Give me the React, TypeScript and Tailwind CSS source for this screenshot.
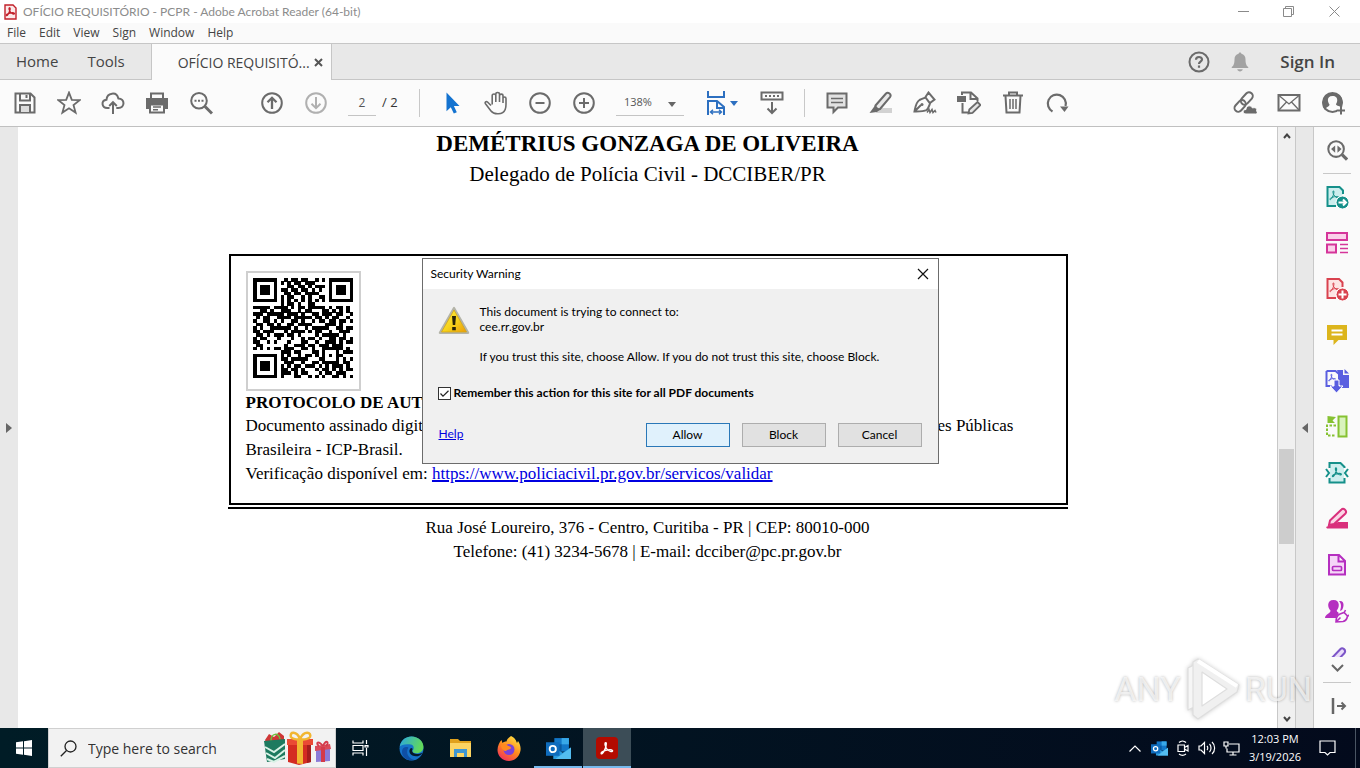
import type { ReactNode } from 'react';

const ui = "font-['Open_Sans','Noto_Sans',sans-serif]";

const QR_ROWS = [
  '11111110010110110010101111111',
  '10000010101011011100001000001',
  '10111010001101101011101011101',
  '10111010110110110101001011101',
  '10111010011011011110001011101',
  '10000010101100101001101000001',
  '11111110101010101010101111111',
  '00000000101101001100000000000',
  '11111011110101101111101011010',
  '00110100111001011000110101010',
  '11101111101110100110111011001',
  '01011001111011111011010110010',
  '10011010100110100101101101101',
  '01101101001101111000011101000',
  '10100111111010010111110011011',
  '11011100010111101011001001110',
  '01101011101101000010111110100',
  '10110001000100101101001101101',
  '11001010001000110010011101011',
  '01100000010011101101110111000',
  '10101011011100110100111111010',
  '00000000111011000110100010111',
  '11111110101001011010101011000',
  '10000010110111110001100010101',
  '10111010011100100110111110110',
  '10111010101011011101010111010',
  '10111010110110100010110101011',
  '10000010111010110001011011100',
  '11111110100011001010100110101',
];

function Icon({ children, size = 24, className = 'text-[#6b6b6b]' }: { children: ReactNode; size?: number; className?: string }) {
  return (
    <svg width={size} height={size} viewBox="0 0 24 24" fill="none" stroke="currentColor" strokeWidth="2" className={`shrink-0 ${className}`} aria-hidden="true">
      {children}
    </svg>
  );
}

function ToolButton({ label, children }: { label: string; children: ReactNode }) {
  return (
    <button aria-label={label} className="flex h-11 w-11 shrink-0 items-center justify-center">
      {children}
    </button>
  );
}

function AcrobatMark({ x = 0, y = 0, s = 1, w = 1.4 }: { x?: number; y?: number; s?: number; w?: number }) {
  return (
    <path
      transform={`translate(${x} ${y}) scale(${s})`}
      strokeWidth={w}
      strokeLinejoin="round"
      d="M5.2 1c-1-.2-1 1.300-.6 2.600C5.200 5.800 7 8 9 8.600c1.500.4 2.300-.3 1.800-.9-.8-.9-4.300-.5-6.500.2C2 8.600.6 9.800 1 10.500c.5.8 1.900-.6 2.700-2.400C4.700 6.200 6.200 1.800 5.200 1Z"
    />
  );
}

function TitleBar() {
  return (
    <header className="flex h-[23px] shrink-0 items-center bg-white pr-[2px] font-[Lato,sans-serif] text-[#8c8c8c]">
      <svg className="ml-1 shrink-0" width="13" height="16" viewBox="0 0 13 16" fill="none" stroke="#c2202a" aria-hidden="true">
        <path d="M1 1h8l3 3v11H1z" fill="#fbe9e9" strokeWidth="1.400" />
        <AcrobatMark x={1.600} y={3} s={0.8} w={1.700} />
      </svg>
      <h1 className="ml-[6px] text-[12px]">OFÍCIO REQUISITÓRIO - PCPR - Adobe Acrobat Reader (64-bit)</h1>
      <div className="ml-auto flex">
        <button aria-label="Minimize" className="flex h-[22px] w-[45px] items-center justify-center">
          <svg width="11" height="11" stroke="#8a8a8a"><path d="M0 5.500h11" /></svg>
        </button>
        <button aria-label="Restore" className="flex h-[22px] w-[45px] items-center justify-center">
          <svg width="11" height="11" stroke="#8a8a8a" fill="none"><path d="M.5 2.500h8v8h-8zM2.500 2.500v-2h8v8h-2" /></svg>
        </button>
        <button aria-label="Close window" className="flex h-[22px] w-[47px] items-center justify-center">
          <svg width="11" height="11" stroke="#8a8a8a"><path d="M.5.5l10 10M10.500.5l-10 10" /></svg>
        </button>
      </div>
    </header>
  );
}

function MenuBar() {
  return (
    <nav className="flex h-5 shrink-0 items-center gap-[13px] bg-[#fafafa] pl-[7px] text-[12px] text-[#444]">
      {['File', 'Edit', 'View', 'Sign', 'Window', 'Help'].map((m) => (
        <button key={m}>{m}</button>
      ))}
    </nav>
  );
}

function TabBar() {
  return (
    <div className="flex h-[37px] shrink-0 border-y border-[#c6c6c6] bg-[#e8e8e8] text-[14px] text-[#444]">
      <button className="pl-4 text-[15px]">Home</button>
      <button className="pl-[29px] text-[15px]">Tools</button>
      <div className="-mb-px ml-[26px] flex w-[181px] items-center justify-between border-x border-[#c6c6c6] bg-[#fbfbfb] pr-2 pl-[26px]">
        <span>OFÍCIO REQUISITÓ...</span>
        <button aria-label="Close tab">
          <svg width="9" height="9" stroke="#555" strokeWidth="2"><path d="M1 1l7 7M8 1l-7 7" /></svg>
        </button>
      </div>
      <div className="ml-auto flex items-center pr-[25px]">
        <button aria-label="Help center" className="flex w-[41px] justify-center">
          <Icon>
            <circle cx="12" cy="12" r="9.500" />
            <path d="M9 9.800c0-3.800 6-3.600 6-.3 0 2.200-3 2.200-3 4.500M12 15.500v2.300" strokeWidth="2.200" />
          </Icon>
        </button>
        <button aria-label="Notifications" className="flex w-[41px] justify-center">
          <Icon size={22} className="text-[#a2a2a2]">
            <path fill="currentColor" stroke="none" d="M12 1.500c1 0 1.500.7 1.500 1.500 3 .7 4.500 3 4.500 6 0 5 1 7 3 8.500v1H3v-1C5 16 6 14 6 9c0-3 1.500-5.300 4.500-6 0-.8.5-1.500 1.500-1.500zM9 20h6c-.5 3-5.500 3-6 0z" />
          </Icon>
        </button>
        <button className="ml-5 text-[17px] font-semibold">Sign In</button>
      </div>
    </div>
  );
}

function Toolbar() {
  return (
    <div className="flex h-[47px] shrink-0 items-center border-b border-[#c0c0c0] bg-[#fbfbfb] pr-[5px] pl-[3px] text-[12px] text-[#333]">
      <ToolButton label="Save">
        <Icon><path d="M2.500 2.500h15l4 4v15h-19zM7 3v6.500h10V3M13.500 4v3" /><path d="M7 21v-7h10v7" fill="#ddd" /></Icon>
      </ToolButton>
      <ToolButton label="Add to starred">
        <Icon><path d="M12 1.600l2.800 7.300 7.800.3-6.100 4.900 2.100 7.500-6.600-4.300-6.600 4.300 2.100-7.500L1.400 9.200l7.800-.3z" strokeWidth="1.800" /></Icon>
      </ToolButton>
      <ToolButton label="Upload">
        <Icon><path d="M8.500 17H6.300c-5.700 0-6.700-7.500-.8-8.300C6 1.500 15.800.2 17.300 7.400c6.900.3 6.900 9.600 0 9.600h-2M12 23V11.500M8.200 15L12 11.200l3.800 3.800" /></Icon>
      </ToolButton>
      <ToolButton label="Print">
        <Icon>
          <path d="M1 7h22v11h-3v-4H4v4H1z" fill="currentColor" stroke="none" />
          <path d="M6 8V2.500h12V8" />
          <path d="M5 13.500h14v8H5z" fill="#fbfbfb" />
          <path d="M8 16h8M8 18.700h5" strokeWidth="1.400" />
        </Icon>
      </ToolButton>
      <ToolButton label="Find">
        <Icon><circle cx="10" cy="9.800" r="7.800" /><path d="M16 15.500l7 7" strokeWidth="3" /><path d="M5.500 9.800h2m1.500 0h2m1.500 0h2" /></Icon>
      </ToolButton>
      <div className="ml-[27px] flex">
        <ToolButton label="Previous page">
          <Icon><circle cx="12" cy="12" r="9.800" /><path d="M12 18V7M7.500 11.200L12 6.800l4.500 4.400" strokeWidth="2.300" /></Icon>
        </ToolButton>
        <ToolButton label="Next page">
          <Icon className="text-[#b0b0b0]"><circle cx="12" cy="12" r="9.800" /><path d="M12 6v11M7.500 12.800l4.500 4.400 4.500-4.400" /></Icon>
        </ToolButton>
      </div>
      <input aria-label="Page number" defaultValue="2" className="ml-[10px] h-[26px] w-7 border-b border-[#c4c4c4] bg-transparent text-center text-[#555]" />
      <span className="ml-[6px] w-[18px] text-[13px] whitespace-pre">/ 2</span>
      <span className="mr-[10px] ml-[19px] h-7 w-px bg-[#c8c8c8]" />
      <ToolButton label="Select">
        <Icon className="text-[#1473d0]"><path d="M6.500 1.500v18.700l4.300-4 3 6.300 3-1.300-2.900-6.200h5.600z" fill="currentColor" stroke="none" /></Icon>
      </ToolButton>
      <ToolButton label="Pan">
        <Icon><path d="M7 14.500L3.500 11C2.200 9.900.5 11.300 1.500 12.800L7 20c2.600 3.700 12 4.200 14.200-1.500.6-1.500.8-3 .8-5.500V7.500c0-2-3-2-3 0V12M19 9V4.800c0-2.200-3.500-2.200-3.500 0V11M15.500 6V3.200c0-2.200-3.700-2.200-3.700 0V11M11.800 6V4.600c0-2.200-3.600-2.200-3.600 0v9" strokeWidth="1.600" /></Icon>
      </ToolButton>
      <ToolButton label="Zoom out"><Icon><circle cx="12" cy="12" r="9.800" /><path d="M7.500 12h9" /></Icon></ToolButton>
      <ToolButton label="Zoom in"><Icon><circle cx="12" cy="12" r="9.800" /><path d="M7 12h10M12 7v10" /></Icon></ToolButton>
      <div className="relative ml-[10px] h-[26px] w-[68px] border-b border-[#c4c4c4]">
        <select aria-label="Zoom level" className="h-full w-full appearance-none bg-transparent pl-2 text-[11px] text-[#555]">
          <option>138%</option>
        </select>
        <svg className="pointer-events-none absolute top-3 right-2" width="8" height="5" fill="#666"><path d="M0 0h8L4 5z" /></svg>
      </div>
      <button aria-label="Fit width" className="ml-5 flex h-11 w-[36px] items-center">
        <svg width="24" height="26" viewBox="0 0 24 26" fill="none" stroke="#2c6fc0" strokeWidth="2" aria-hidden="true">
          <path d="M4 1v6h16V1M4 25V11h9l7 6v8M13 12v6h6" />
          <path d="M7 22h10M9 19.800L6.500 22 9 24.200M15 19.800l2.500 2.200-2.500 2.200" strokeWidth="1.400" />
        </svg>
        <svg className="ml-[2px]" width="8" height="5" fill="#2c6fc0"><path d="M0 0h8L4 5z" /></svg>
      </button>
      <div className="ml-[10px]">
        <ToolButton label="Scrolling"><Icon><path d="M1.500 1.500h21v7h-21z" /><path d="M5 5h14" strokeDasharray="2 2" /><path d="M12 11v11M7.500 17.500L12 22l4.500-4.500" /></Icon></ToolButton>
      </div>
      <span className="mr-[10px] ml-[10px] h-7 w-px bg-[#c8c8c8]" />
      <ToolButton label="Comment"><Icon><path d="M2.500 2.500h19v14h-8.500l-4.500 4.500v-4.500h-6z" fill="#e2e2e2" /><path d="M6 7.500h12M6 11.500h12" strokeWidth="1.500" /></Icon></ToolButton>
      <ToolButton label="Highlight"><Icon><path d="M9 17h14v5H7z" fill="#d2d2d2" stroke="none" /><path d="M6.500 14.500L17 2.500c2-2 6 1 4 3.700L11 18l-4 1z" fill="#e8e8e8" /><path d="M6 14.500l5 4-3 2.500-7.500 1z" fill="currentColor" stroke="none" /></Icon></ToolButton>
      <ToolButton label="Sign"><Icon><path d="M1.500 20.500c1-5 1.500-9.500 5-11.500 2-1 4-1.700 6-2.500l4.500 6c-1 2.500-1.500 5-3.500 6.500-3 1.700-7.500 1.500-12 1.500zM2 20l6-6M12.500 6l3-4.500 6 7L17 12" /><circle cx="9" cy="13.500" r="1.500" fill="currentColor" stroke="none" /><path d="M14 21.500l2-3 1 3 2-3 1 3 2-2 1 2" strokeWidth="1.500" /></Icon></ToolButton>
      <ToolButton label="Edit document"><Icon><path d="M5 4V1.500h9l6.500 6V10M13.500 2v6H20M5.500 12v9.500H11" /><path d="M0 5h9v6H0z" fill="currentColor" stroke="none" /><path d="M20.500 11l3 3-8 8-4 .5.800-4z" fill="#e5e5e5" strokeWidth="1.800" /></Icon></ToolButton>
      <ToolButton label="Delete"><Icon><path d="M2 4.500h20M8 4V1.500h8V4M4.500 5l1 16.500h13l1-16.500" /><path d="M9 8v10M12 8v10M15 8v10" strokeWidth="1.500" /></Icon></ToolButton>
      <ToolButton label="Rotate"><Icon><path d="M7.500 20.500A9 9 0 1 1 20.500 15" strokeWidth="2.200" /><path d="M15 15.500h8.500l-4 5.500z" fill="currentColor" stroke="none" /></Icon></ToolButton>
      <div className="ml-auto flex">
        <ToolButton label="Share link">
          <Icon>
            <g transform="rotate(-48 11 11)"><rect x="-1" y="7" width="13" height="7.500" rx="3.700" /><rect x="8.500" y="7" width="14" height="7.500" rx="3.700" /></g>
            <path d="M13 23c-3.500 0-4-4.500 0-4.500 0-4 5-5 6.500-1.500 3-1 5 .5 4 3 1.500 1 1 3-1 3z" fill="currentColor" stroke="#fbfbfb" strokeWidth="1" />
          </Icon>
        </ToolButton>
        <ToolButton label="Send by email"><Icon><path d="M1.500 4h21v15.500h-21z" /><path d="M2 4.500l10 8.500 10-8.500M2 19l7.500-8M22 19l-7.500-8" strokeWidth="1.300" /></Icon></ToolButton>
        <ToolButton label="Add people">
          <Icon>
            <circle cx="11.500" cy="11.500" r="9.500" />
            <path d="M4 19c-5-6-2-17 7.500-17S23.500 11 20 16c-2-1.500-5-1-5-3 2-3 2-8-3.500-8S6 10 8.500 13.500C8.500 16 4.500 16 4 19z" fill="currentColor" stroke="none" />
            <path d="M16 16h8v8h-8z" fill="#fbfbfb" stroke="none" /><path d="M20 15.500v8M16 19.500h8" />
          </Icon>
        </ToolButton>
      </div>
    </div>
  );
}

function QrCode() {
  return (
    <svg width="100" height="100" viewBox="0 0 29 29" shapeRendering="crispEdges" role="img" aria-label="QR code">
      {QR_ROWS.flatMap((row, y) =>
        [...row].map((c, x) => (c === '1' ? <rect key={`${x}-${y}`} x={x} y={y} width="1.020" height="1.020" /> : null)),
      )}
    </svg>
  );
}

function DocumentPage() {
  return (
    <article className="min-w-0 flex-1 overflow-hidden bg-white font-['Liberation_Serif',serif] text-black">
      <h2 className="mt-[2px] text-center text-[23px] leading-[30px] font-bold">DEMÉTRIUS GONZAGA DE OLIVEIRA</h2>
      <p className="text-center text-[21px] leading-[30px]">Delegado de Polícia Civil - DCCIBER/PR</p>
      <div className="mx-auto mt-[65px] w-[840px] border-b-2 border-black pb-[2px]">
        <section className="ml-px border-2 border-black px-[15px] pt-[15px] pb-[17px] text-[17px] leading-6">
          <div className="h-[120px] w-[115px] border-2 border-[#cfcfcf] p-[5px]">
            <QrCode />
          </div>
          <h3 className="leading-[23px] font-bold whitespace-nowrap">PROTOCOLO DE AUTENTICIDADE</h3>
          <div className="flex justify-between whitespace-nowrap">
            <span>Documento assinado digit</span>
            <span className="mr-[37px]">es Públicas</span>
          </div>
          <p>Brasileira - ICP-Brasil.</p>
          <p>
            Verificação disponível em:{' '}
            <a href="https://www.policiacivil.pr.gov.br/servicos/validar" className="text-[#0000e0] underline decoration-2">
              https://www.policiacivil.pr.gov.br/servicos/validar
            </a>
          </p>
        </section>
      </div>
      <footer className="mt-[7px] text-center text-[17px] leading-6">
        <p>Rua José Loureiro, 376 - Centro, Curitiba - PR | CEP: 80010-000</p>
        <p>Telefone: (41) 3234-5678 | E-mail: dcciber@pc.pr.gov.br</p>
      </footer>
    </article>
  );
}

function ScrollBar() {
  return (
    <div className="flex w-[19px] shrink-0 flex-col items-center border-x border-[#c8c8c8] bg-[#f0f0f0]">
      <button aria-label="Scroll up" className="flex h-[18px] items-center">
        <svg width="8" height="6" fill="none" stroke="#444" strokeWidth="2"><path d="M1 5l3-3.500L7 5" /></svg>
      </button>
      <div className="flex-[304]" />
      <div className="w-[15px] flex-[95] bg-[#cdcdcd]" />
      <div className="flex-[166]" />
      <button aria-label="Scroll down" className="flex h-[18px] items-center">
        <svg width="8" height="6" fill="none" stroke="#444" strokeWidth="2"><path d="M1 1l3 3.500L7 1" /></svg>
      </button>
    </div>
  );
}

const sideTools: { label: string; color: string; art: ReactNode }[] = [
  { label: 'Export PDF', color: 'text-[#15908a]', art: (<><path d="M18 9V5.500L14.500 2H2.500v19H11" fill="#cdeeee" /><AcrobatMark x={4} y={5} s={0.9} w={1.100} /><circle cx="17.500" cy="17.500" r="6.500" fill="currentColor" stroke="#fff" strokeWidth="1" /><path d="M13.500 17.500h7M18 14.500l3 3-3 3" stroke="#fff" /></>) },
  { label: 'Edit PDF', color: 'text-[#d5359a]', art: (<><path d="M2 2h20v7H2zM2 13.500h9v8H2z" fill="#fbd0ea" /><path d="M15 13.500h8M15 17.500h8M15 21.500h8" strokeWidth="1.300" /></>) },
  { label: 'Create PDF', color: 'text-[#d9424f]', art: (<><path d="M17.500 10V5.500L14 2H2.500v19H11" fill="#fde4e4" /><AcrobatMark x={4} y={5} s={0.9} w={1.100} /><circle cx="17.500" cy="17.500" r="6.500" fill="currentColor" stroke="#fff" strokeWidth="1" /><path d="M13.500 17.500h8M17.500 13.500v8" stroke="#fff" /></>) },
  { label: 'Comment tools', color: 'text-[#dcb51c]', art: (<><path d="M2 2h20v15h-8.500L8.500 22v-5H2z" fill="currentColor" stroke="none" /><path d="M6.500 7.500h11M6.500 11.500h11" stroke="#fff" strokeWidth="1.800" /></>) },
  { label: 'Combine files', color: 'text-[#5a5fe0]', art: (<><path d="M12 1h6v5h6v13h-9V9z" fill="currentColor" stroke="none" /><path d="M19.500 0v4.500H24z" fill="currentColor" stroke="none" /><path d="M1.500 2h9l3.500 3v11M1.500 2v15H7" /><AcrobatMark x={3} y={4.500} s={0.7} w={1.400} /><path d="M9 11h5v6h4l-6.500 7L5 17h4z" fill="currentColor" stroke="#fff" strokeWidth="1" /></>) },
  { label: 'Organize pages', color: 'text-[#86c232]', art: (<><path d="M13.500 1.500h8v20h-8z" fill="#d9f3bd" /><path d="M11 10.500H2v10h9" strokeDasharray="2.500 1.500" /><path d="M2.500 1v7H10L7.500 5.500 11 2" fill="currentColor" stroke="none" /></>) },
  { label: 'Compress PDF', color: 'text-[#15908a]', art: (<><path d="M4.500 7V2h11l4 4v1M4.500 17v4.500h15V17" fill="#cdeeee" /><path d="M5 7h14v10H5z" fill="#cdeeee" stroke="none" /><path d="M1 8l3 4-3 4M23 8l-3 4 3 4" /><AcrobatMark x={6.500} y={6} s={0.9} w={1.300} /></>) },
  { label: 'Redact', color: 'text-[#d9307c]', art: (<><path d="M13 15h10v6.500H2L1 20z" fill="currentColor" stroke="none" /><path d="M5 13.500L16.500 2.500c2-2 6 1.500 4 4L9 17l-5 1z" fill="#fbd6e6" /></>) },
  { label: 'Prepare form', color: 'text-[#b52fc0]', art: (<><path d="M4 2h10l6 6v13.500H4zM13.500 2.500V8.500H20" fill="#f5d6f7" /><rect x="7.500" y="13.500" width="9" height="4" rx="1" strokeWidth="1.700" /></>) },
  { label: 'Request signatures', color: 'text-[#b52fc0]', art: (<><path d="M8.500 1c7 0 6 8 3.200 10.500 0 1.500 2 1.500 2 3L11 19H0c0-4 5.500-4 5.500-7.500C2.500 9 1.500 1 8.500 1zM14 2c6-1 5 6 3 9l-2 1c1-3 2-7-1-10z" fill="currentColor" stroke="none" /><path d="M11 23c0-4 1.500-7 4-8l4-1.500L22.500 17c-.5 3-2 5-4.500 5.500zM11.500 22.500l4-4M19.500 13l1-2M23 17l1.500-1" strokeWidth="1.600" /></>) },
  { label: 'Fill and sign', color: 'text-[#7c55c8]', art: (<path d="M4 16L15.500 4c2-2 6 1 4 4L9 19" fill="#e9dcfa" />) },
];

function ToolsPanel() {
  return (
    <aside className="flex w-[47px] shrink-0 flex-col items-center border-l border-[#c8c8c8] bg-[#fafafa]">
      <button aria-label="Search tools" className="flex h-[46px] shrink-0 items-center">
        <Icon size={22}><circle cx="11" cy="11" r="8.500" strokeWidth="2.200" /><path d="M17.500 17l5.500 5.500" strokeWidth="3.500" /><path d="M10 7v8l-4.500-4zM12.500 7v8l4.500-4z" fill="currentColor" stroke="none" /></Icon>
      </button>
      <hr className="w-7 shrink-0 border-[#c8c8c8]" />
      <div className="flex min-h-0 flex-1 flex-col overflow-hidden">
        {sideTools.map((t) => (
          <button key={t.label} aria-label={t.label} className="flex h-[46px] shrink-0 items-center">
            <Icon className={t.color}>{t.art}</Icon>
          </button>
        ))}
      </div>
      <button aria-label="More tools" className="flex h-[25px] shrink-0 items-center pb-1">
        <svg width="13" height="8" fill="none" stroke="#666" strokeWidth="2"><path d="M1 1l5.500 5.500L12 1" /></svg>
      </button>
      <hr className="w-7 shrink-0 border-[#c8c8c8]" />
      <button aria-label="Collapse panel" className="flex h-[45px] shrink-0 items-center pl-1">
        <svg width="16" height="16" fill="none" stroke="#666" strokeWidth="2"><path d="M2 0v16" strokeWidth="2.500" /><path d="M6 8h8M10.500 4.500L14 8l-3.500 3.500" /></svg>
      </button>
    </aside>
  );
}

function Watermark() {
  return (
    <div className="pointer-events-none absolute right-[48px] bottom-[8px] flex items-center gap-[4px] font-[Roboto,sans-serif] text-[34px] text-white/70 [text-shadow:0_0_3px_rgba(0,0,0,0.3)]">
      <span>ANY</span>
      <svg width="56" height="62" viewBox="0 0 56 62" fill="none" stroke="#dedede" strokeWidth="1.200" strokeLinejoin="round" className="drop-shadow-[0_0_2px_rgba(0,0,0,0.2)]" aria-hidden="true">
        <path d="M3 10l6-3v42l-6 3z" fill="#f6f6f6" />
        <path d="M13 1l41 26-2 7-39 27-5-4V4z" fill="#f0f0f0" />
        <path d="M17 14l25 17-25 17z" fill="#fff" />
        <path d="M13 3l39 25" stroke="#fff" strokeWidth="4" />
      </svg>
      <span>RUN</span>
    </div>
  );
}

function SecurityDialog() {
  const btn = 'h-6 w-[84px] border border-[#adadad] bg-[#e1e1e1]';
  return (
    <div className="pointer-events-none fixed inset-0 flex items-start justify-center pt-[258px]">
      <div role="dialog" aria-labelledby="dialog-title" className="pointer-events-auto w-[517px] border border-[#6c6c6c] bg-[#f0f0f0] font-[Lato,sans-serif] text-[12px] text-black">
        <div className="flex h-[30px] items-center justify-between bg-white pr-[9px] pl-2">
          <h2 id="dialog-title">Security Warning</h2>
          <button aria-label="Close dialog">
            <svg width="12" height="12" stroke="#111" strokeWidth="1.200"><path d="M1 1l10 10M11 1L1 11" /></svg>
          </button>
        </div>
        <div className="flex pt-[15px] pl-[15px]">
          <svg className="mt-[2px]" width="32" height="30" viewBox="0 0 32 30" aria-hidden="true">
            <defs>
              <linearGradient id="warn" x1="0" y1="0" x2="1" y2="1">
                <stop offset="0" stopColor="#fff04a" /><stop offset=".55" stopColor="#f7d21a" /><stop offset="1" stopColor="#eb9c0a" />
              </linearGradient>
            </defs>
            <path d="M15 1.500c.5-1 1.500-1 2 0L31 26c.6 1.200 0 2-1 2H2c-1 0-1.600-.8-1-2z" fill="#b4b4a8" />
            <path d="M16 4l12.500 22h-25z" fill="url(#warn)" stroke="#d4a614" strokeWidth=".8" />
            <path d="M14 10h4l-.8 9h-2.400zM14.200 21h3.600v3.200h-3.600z" fill="#2a2408" />
          </svg>
          <div className="ml-[10px] leading-[15px]">
            <p>This document is trying to connect to:</p>
            <p>cee.rr.gov.br</p>
            <p className="mt-[15px]">If you trust this site, choose Allow. If you do not trust this site, choose Block.</p>
          </div>
        </div>
        <label className="mt-[21px] flex items-center gap-[3px] pl-[15px] font-bold leading-4">
          <span className="relative flex">
            <input type="checkbox" defaultChecked className="h-[13px] w-[13px] appearance-none border border-[#333] bg-white" />
            <svg className="pointer-events-none absolute top-[3px] left-[2px]" width="9" height="8" fill="none" stroke="#222" strokeWidth="1.200"><path d="M.5 3.500l2.500 2.700L8.500.8" /></svg>
          </span>
          Remember this action for this site for all PDF documents
        </label>
        <div className="flex gap-3 pt-[22px] pr-4 pb-4 pl-4">
          <a href="#help" className="mr-auto pt-[2px] text-[#0000e0] underline">Help</a>
          <button className="h-6 w-[84px] border border-[#2a78b8] bg-[#e0f1fc]">Allow</button>
          <button className={btn}>Block</button>
          <button className={btn}>Cancel</button>
        </div>
      </div>
    </div>
  );
}

function OutlookIcon({ size }: { size: number }) {
  return (
    <svg width={size} height={size} viewBox="0 0 24 24" aria-hidden="true">
      <path d="M8 2h14v13H8z" fill="#1277c8" /><path d="M15 2h7v6h-7z" fill="#38a8e8" /><path d="M8 8h7v7H8z" fill="#0a5aa0" />
      <path d="M7 11l9 5 8-5v11H7z" fill="#2a9be0" /><path d="M24 11v11H9z" fill="#53bdf0" />
      <path d="M0 6h13v13H0z" fill="#0f6cbd" /><circle cx="6.500" cy="12.500" r="3" fill="none" stroke="#fff" strokeWidth="1.800" />
    </svg>
  );
}

function Gifts() {
  return (
    <svg width="70" height="34" viewBox="0 0 70 34" aria-hidden="true">
      <path d="M2 9l4-6 5 3 5-5 5 4v7H3z" fill="#cf3636" /><path d="M8 10c0-8 8-9 9-2" fill="none" stroke="#6cbf3c" strokeWidth="1.500" />
      <path d="M1 10l21-2v20L4 31z" fill="#1d7a5f" />
      <path d="M2 16l9 5 11-8M3 22l9 5 10-8M4 28l7 3 11-6" fill="none" stroke="#d9f2e6" strokeWidth="2" />
      <path d="M25 12h23v19l-12 3-11-3z" fill="#d42c22" /><path d="M24 8h26v6H24z" fill="#ea4a34" /><path d="M44 14h4v17l-4 1z" fill="#a61d1d" />
      <path d="M34 8h6v25l-6-.5z" fill="#f2b632" />
      <path d="M37 8c-3-8-11-8-9-2 1 2 6 3 9 2 4-9 12-7 10-2-1 2-6 3-10 2" fill="none" stroke="#f2b632" strokeWidth="2.500" />
      <path d="M53 18l14-1v13l-14 1z" fill="#8a7ad8" /><path d="M52 15l15-2 1 5-16 2z" fill="#db4a58" /><path d="M58 16h4v15h-4z" fill="#d43a4a" /><path d="M60 15c-5-6-8-3-4 0M60 15c3-7 7-4 3 0" fill="none" stroke="#d43a4a" strokeWidth="1.800" />
    </svg>
  );
}

function TaskButton({ label, state = 'border-transparent', children }: { label: string; state?: string; children: ReactNode }) {
  return (
    <button aria-label={label} className={`flex w-12 shrink-0 items-center justify-center border-b-2 pt-[2px] ${state}`}>
      {children}
    </button>
  );
}

function Taskbar() {
  return (
    <footer className="relative flex h-10 shrink-0 bg-linear-to-r from-[#001c26] to-[#030a1c] text-white">
      <button aria-label="Start" className="flex w-12 shrink-0 items-center justify-center">
        <svg width="16" height="16" fill="#fff"><path d="M0 2.300L7 1.300v6.200H0zM8 1.200L16 0v7.500H8zM0 8.500h7v6.200l-7-1zM8 8.500h8V16l-8-1.200z" /></svg>
      </button>
      <div className="flex w-72 shrink-0 items-center border border-[#d0d0d0] bg-[#f2f2f2] pl-[11px]">
        <svg width="17" height="17" fill="none" stroke="#222" strokeWidth="1.300" className="shrink-0" aria-hidden="true"><circle cx="10.500" cy="6.500" r="5.500" /><path d="M6.500 10.500L.8 16.200" /></svg>
        <input aria-label="Search" placeholder="Type here to search" className="ml-[11px] min-w-0 flex-1 bg-transparent text-[14px] placeholder:text-[#333]" />
        <span className="mr-[2px] shrink-0"><Gifts /></span>
      </div>
      <div className="mr-[2px] flex">
        <TaskButton label="Task view">
          <svg width="17" height="16" fill="none" stroke="#fff" strokeWidth="1.200"><path d="M1 .5v2.500h10V.5M1 15.500V13h10v2.500M1 5.500h10v5H1zM14.500 0v4M14.500 8v8M13 5.500h3v1.500h-3z" /></svg>
        </TaskButton>
      </div>
      <div className="flex gap-px pl-px">
        <TaskButton label="Microsoft Edge">
          <svg width="25" height="25" viewBox="0 0 24 24">
            <defs><linearGradient id="edge" x1="0" y1="0" x2="1" y2=".3"><stop offset="0" stopColor="#2aa7e0" /><stop offset="1" stopColor="#62d95b" /></linearGradient></defs>
            <circle cx="12" cy="12" r="11.500" fill="#1572c9" />
            <path d="M.7 10C2 4 6.500.5 12 .5c7 0 11.500 5 11.500 10 0 4.500-4 6-7 6-4 0-4-2-3-3 1.500-2 .5-5.500-3.500-5.500C5 7.500 2 9 .7 10z" fill="url(#edge)" />
            <path d="M9 11c-3 5 0 11 6 12-8 2-13-4-12-9 .5-3 3-4 6-3z" fill="#0f4fa5" />
            <path d="M12.500 14c0 3 5 4.500 10 2-3 5-10 4-12 .5-1-2-.5-4 1-5 1.800 0 1.800 1 1 2.500z" fill="#06182a" />
          </svg>
        </TaskButton>
        <TaskButton label="File Explorer">
          <svg width="23" height="20" viewBox="0 0 23 20">
            <path d="M1 1h8l2 2h11v6H1z" fill="#e0a11c" /><path d="M1 5h21v14H1z" fill="#fcd462" />
            <path d="M5 11h13v8h-3v-4H8v4H5z" fill="#3f96d2" />
          </svg>
        </TaskButton>
        <TaskButton label="Firefox">
          <svg width="24" height="25" viewBox="0 0 24 25">
            <defs><linearGradient id="fox" x1=".8" y1="0" x2=".2" y2="1"><stop offset="0" stopColor="#ffe343" /><stop offset=".5" stopColor="#ff8a1e" /><stop offset="1" stopColor="#f02a60" /></linearGradient></defs>
            <path d="M14 0c4 2 5 4 6 7l1-2c2 3 3 6 2.500 9.500C22.500 21 17 25 12 25 5 25 .5 19.500.5 14c0-4 2-8 4-10l1 3c1-1 2-1.500 4-1.500C10 3 12 1.500 14 0z" fill="url(#fox)" />
            <circle cx="12" cy="13.500" r="5.500" fill="#7a42d8" /><path d="M4 9c3-2 6-1 7 1 2 0 3 1 3 2-1 2-4 1-5 3-2 0-5-2-5-6z" fill="#ff8a20" />
          </svg>
        </TaskButton>
        <TaskButton label="Outlook" state="border-[#76b9ed]"><OutlookIcon size={25} /></TaskButton>
        <TaskButton label="Adobe Acrobat" state="border-[#76b9ed] bg-[#3c4d57]">
          <svg width="22" height="22" viewBox="0 0 22 22" fill="none" stroke="#fff"><rect width="22" height="22" rx="4" fill="#b30b00" stroke="none" /><AcrobatMark x={4} y={4.500} s={1.150} w={1.200} /></svg>
        </TaskButton>
      </div>
      <div className="ml-auto flex items-center">
        <button aria-label="Show hidden icons" className="flex w-6 justify-center"><svg width="12" height="7" fill="none" stroke="#fff" strokeWidth="1.200"><path d="M.5 6.500L6 1l5.500 5.500" /></svg></button>
        <button aria-label="Outlook tray" className="flex w-6 justify-center"><OutlookIcon size={17} /></button>
        <button aria-label="Meet now" className="flex w-6 justify-center"><svg width="14" height="16" fill="none" stroke="#fff" strokeWidth="1.200"><path d="M2 5h6.500v6.500H2zM8.500 7.500L12 5.500v5.500L8.500 9M3 2.500c2-2 5-2 7 0M3 14c2 1.500 5 1.500 7 0" /></svg></button>
        <button aria-label="Volume" className="flex w-6 justify-center"><svg width="18" height="14" fill="none" stroke="#fff" strokeWidth="1.200"><path d="M1 5h2l3.500-3.500v11L3 9H1zM9 5c1 1 1 3 0 4M11.500 3c2 2 2 6 0 8M14 1c3.500 3 3.500 9 0 12" /></svg></button>
        <button aria-label="Network" className="flex w-6 justify-center"><svg width="17" height="15" fill="none" stroke="#fff" strokeWidth="1.200"><path d="M6 3h10v8H4V7.500M10 11v3M6.500 14h7M1 1h4v4H1zM3 5v2.500" /></svg></button>
        <div className="w-[64px] text-center text-[11px] leading-[18px] whitespace-nowrap"><p>12:03 PM</p><p>3/19/2026</p></div>
        <button aria-label="Action center" className="flex w-10 justify-center"><svg width="17" height="17" fill="none" stroke="#fff" strokeWidth="1.200"><path d="M1 1h15v11.500h-5L8.500 15 6 12.500H1z" /></svg></button>
        <span className="mr-1 ml-2 h-10 w-px bg-[#4a5563]" />
      </div>
    </footer>
  );
}

export default function App() {
  return (
    <div className={`flex h-screen flex-col overflow-hidden ${ui}`}>
      <TitleBar />
      <MenuBar />
      <TabBar />
      <Toolbar />
      <main className="relative flex min-h-0 flex-1">
        <button aria-label="Open navigation pane" className="flex w-[18px] shrink-0 items-center justify-center bg-[#e8e8e8]">
          <svg width="6" height="10" fill="#666"><path d="M0 0l6 5-6 5z" /></svg>
        </button>
        <DocumentPage />
        <ScrollBar />
        <button aria-label="Collapse tools pane" className="flex w-[17px] shrink-0 items-center justify-center bg-[#e8e8e8]">
          <svg width="6" height="10" fill="#666"><path d="M6 0L0 5l6 5z" /></svg>
        </button>
        <ToolsPanel />
        <Watermark />
      </main>
      <Taskbar />
      <SecurityDialog />
    </div>
  );
}
